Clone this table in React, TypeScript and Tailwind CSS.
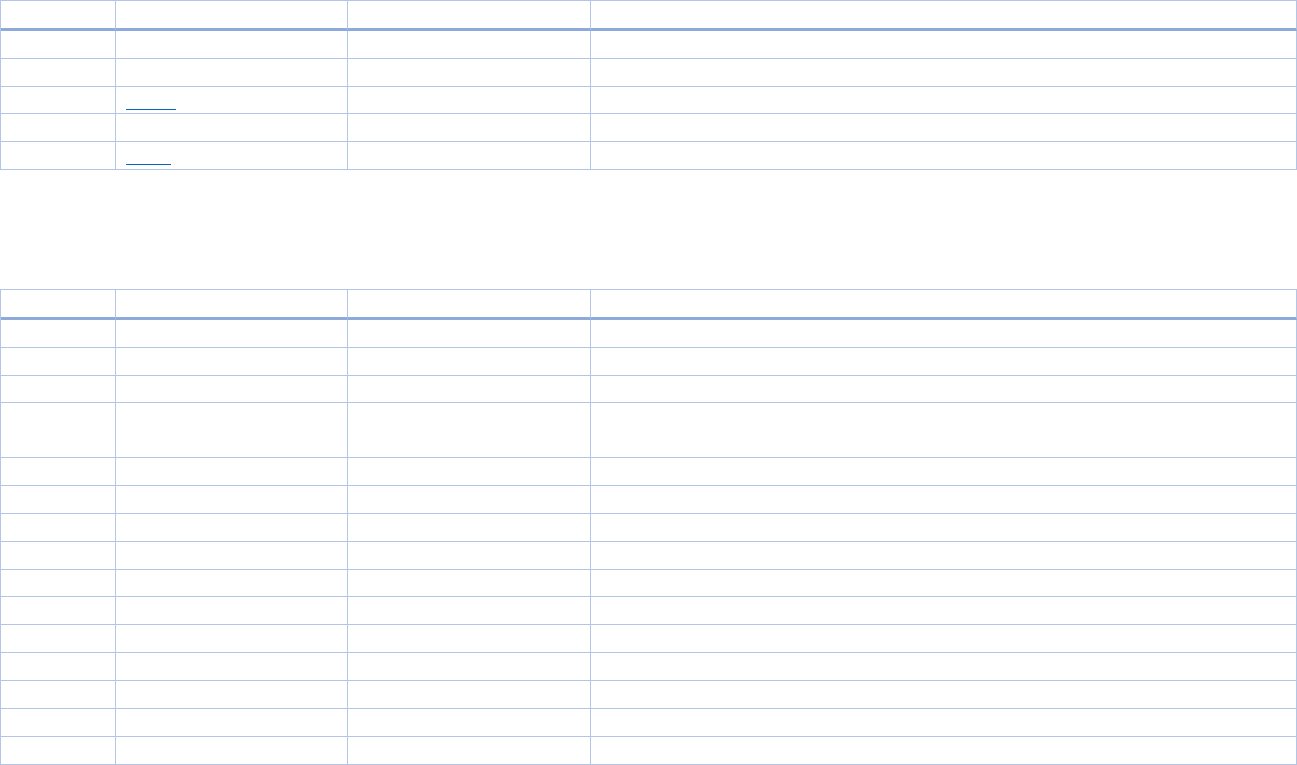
import React from "react";

type Row = { tall?: boolean; link?: number };

const firstRows: Row[] = [{}, {}, { link: 50 }, {}, { link: 45 }];

const secondRows: Row[] = [
  {},
  {},
  {},
  { tall: true },
  {},
  {},
  {},
  {},
  {},
  {},
  {},
  {},
  {},
  {},
  {},
];

function Header() {
  return (
    <thead>
      <tr>
        <th className="w-[115px] h-[30px] border-r border-b-[3px] border-r-[#b4c6e7] border-b-[#8eaadb] p-0"></th>
        <th className="w-[232px] h-[30px] border-r border-b-[3px] border-r-[#b4c6e7] border-b-[#8eaadb] p-0"></th>
        <th className="w-[243px] h-[30px] border-r border-b-[3px] border-r-[#b4c6e7] border-b-[#8eaadb] p-0"></th>
        <th className="h-[30px] border-r border-b-[3px] border-r-[#b4c6e7] border-b-[#8eaadb] p-0"></th>
      </tr>
    </thead>
  );
}

function Cell({ className, children }: { className: string; children?: React.ReactNode }) {
  return <td className={"border-r border-b border-[#b4c6e7] p-0 align-top " + className}>{children}</td>;
}

function DataTable({ rows, rowHeight }: { rows: Row[]; rowHeight: string }) {
  return (
    <table className="w-full table-fixed border-separate border-spacing-0 border-t border-l border-[#b4c6e7]">
      <Header />
      <tbody>
        {rows.map((row, i) => {
          const h = row.tall ? "h-[54.75px]" : i < 3 ? "h-[27.75px]" : rowHeight;
          return (
            <tr key={i}>
              <Cell className={h} />
              <Cell className={h}>
                {row.link ? (
                  <a href="#" className="block pl-[10px] pt-[22px]">
                    <span
                      className="block h-px bg-[#0563c1]"
                      style={{ width: row.link }}
                    ></span>
                  </a>
                ) : null}
              </Cell>
              <Cell className={h} />
              <Cell className={h} />
            </tr>
          );
        })}
      </tbody>
    </table>
  );
}

export default function App() {
  return (
    <div className="w-[1297px] bg-white font-['Liberation_Sans',Arial,sans-serif] text-[15px] text-black">
      <DataTable rows={firstRows} rowHeight="h-[27.75px]" />
      <div className="mt-[119.25px]">
        <DataTable rows={secondRows} rowHeight="h-[27.9px]" />
      </div>
    </div>
  );
}
